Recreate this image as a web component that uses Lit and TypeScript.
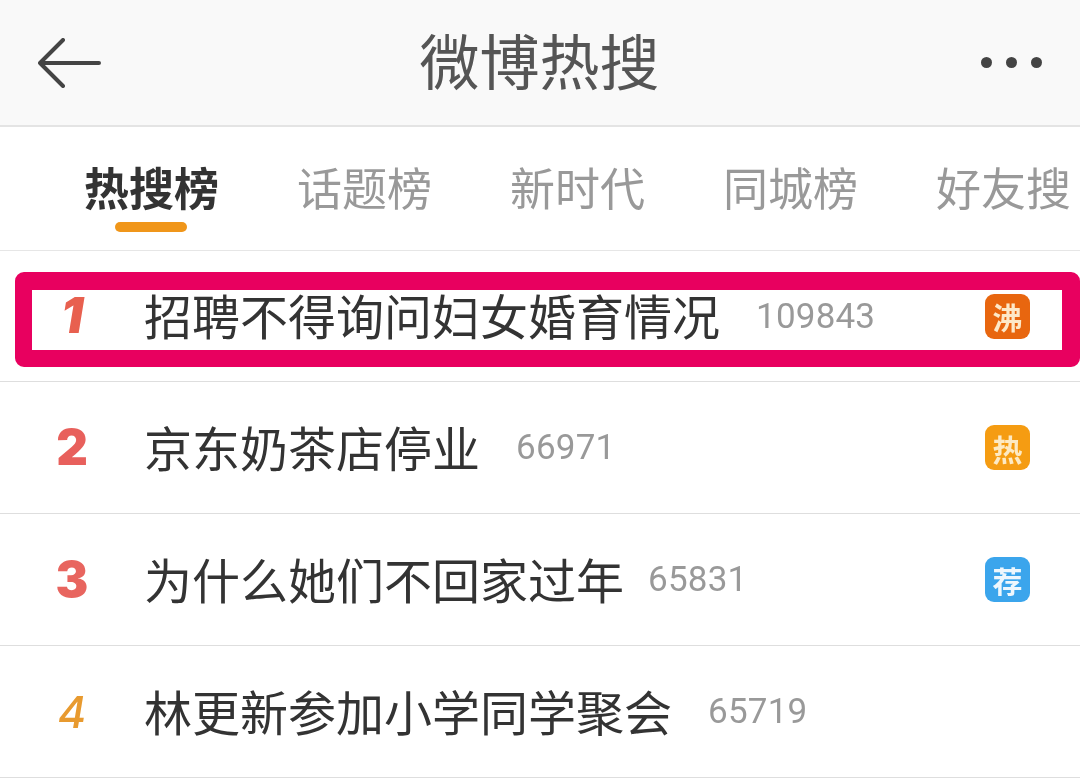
import { LitElement, html, css } from "lit";
import { customElement } from "lit/decorators.js";

const tabs = ["热搜榜", "话题榜", "新时代", "同城榜", "好友搜"];
const rows = [
  { rank: "1", cls: "r1", title: "招聘不得询问妇女婚育情况", count: "109843", gap: 36, badge: "沸", badgeCls: "boil" },
  { rank: "2", cls: "r2", title: "京东奶茶店停业", count: "66971", gap: 36, badge: "热", badgeCls: "hot" },
  { rank: "3", cls: "r3", title: "为什么她们不回家过年", count: "65831", gap: 24, badge: "荐", badgeCls: "rec" },
  { rank: "4", cls: "r4", title: "林更新参加小学同学聚会", count: "65719", gap: 36, badge: "", badgeCls: "" },
];

@customElement("app-root")
export class AppRoot extends LitElement {
  static styles = css`
    :host {
      display: block;
      position: relative;
      width: 1080px;
      height: 781px;
      overflow: hidden;
      background: #fff;
      font-family: "Noto Sans CJK SC", "Liberation Sans", sans-serif;
    }
    .page { filter: blur(0.4px); height: 100%; }
    .header {
      height: 125px;
      background: #f9f9f9;
      border-bottom: 2px solid #e4e4e4;
      display: flex;
      align-items: center;
      justify-content: space-between;
      padding: 0 38px;
    }
    .back { width: 64px; height: 50px; display: block; }
    .title {
      font-size: 60px;
      line-height: 72px;
      color: #555;
      flex: 1;
      text-align: center;
      margin: 0 0 7px -4px;
    }
    .dots { display: flex; gap: 14px; }
    .dots span { width: 11px; height: 11px; border-radius: 50%; background: #444; }
    .tabs {
      height: 123px;
      border-bottom: 1px solid #e6e6e6;
      display: flex;
      gap: 78px;
      padding-left: 84px;
      align-items: center;
      white-space: nowrap;
    }
    .tab {
      position: relative;
      font-size: 45px;
      line-height: 56px;
      color: #999;
      margin-top: -4px;
    }
    .tab.active { color: #333; font-weight: 700; }
    .tab.active::after {
      content: "";
      position: absolute;
      left: 31px;
      width: 72px;
      height: 10px;
      top: 63px;
      border-radius: 5px;
      background: #f0961a;
    }
    .row {
      height: 131px;
      border-bottom: 1px solid #dedede;
      display: flex;
      align-items: center;
      padding: 0 50px 0 40px;
    }
    .row:first-child { height: 130px; }
    .rank {
      width: 64px;
      margin-right: 40px;
      text-align: center;
      font-family: Inter, "Liberation Sans", sans-serif;
      font-size: 49px;
      line-height: 56px;
      font-weight: 900;
    }
    .r1 { color: #e8604f; font-style: italic; }
    .r2 { color: #e8605c; }
    .r3 { color: #e8655f; }
    .r4 { color: #e89a2f; font-style: italic; font-weight: 500; font-size: 44px; }
    .name { font-size: 48px; line-height: 64px; color: #333; white-space: nowrap; margin-bottom: 4px; }
    .count {
      font-family: Roboto, "Liberation Sans", sans-serif;
      font-size: 35px;
      color: #999;
      letter-spacing: 0.2px;
    }
    .badge {
      margin-left: auto;
      width: 45px;
      height: 45px;
      border-radius: 9px;
      display: flex;
      align-items: center;
      justify-content: center;
      font-size: 30px;
      font-weight: 700;
      line-height: 1;
    }
    .boil { background: #e8660f; color: #fde8c8; }
    .hot { background: #f59c12; color: #fdeac4; }
    .rec { background: #3ba5ec; color: #eef7fd; }
    .frame {
      position: absolute;
      left: 15px;
      top: 272px;
      width: 1065px;
      height: 95px;
      box-sizing: border-box;
      border: solid #e8005f;
      border-width: 18px 18px 17px 17px;
      border-radius: 9px;
      pointer-events: none;
    }
  `;

  render() {
    return html`
      <div class="page">
        <div class="header">
          <svg class="back" viewBox="0 0 64 50" fill="none" stroke="#444" stroke-width="4" stroke-linecap="round" stroke-linejoin="round">
            <path d="M2 25H61M25 2 2 25 25 48" />
          </svg>
          <div class="title">微博热搜</div>
          <div class="dots"><span></span><span></span><span></span></div>
        </div>
        <div class="tabs">
          ${tabs.map((t, i) => html`<div class="tab ${i === 0 ? "active" : ""}">${t}</div>`)}
        </div>
        <div class="list">
          ${rows.map(
            (r) => html`
              <div class="row">
                <div class="rank ${r.cls}">${r.rank}</div>
                <div class="name">${r.title}</div>
                <div class="count" style="margin-left:${r.gap}px">${r.count}</div>
                ${r.badge ? html`<div class="badge ${r.badgeCls}">${r.badge}</div>` : ""}
              </div>
            `
          )}
        </div>
        <div class="frame"></div>
      </div>
    `;
  }
}
